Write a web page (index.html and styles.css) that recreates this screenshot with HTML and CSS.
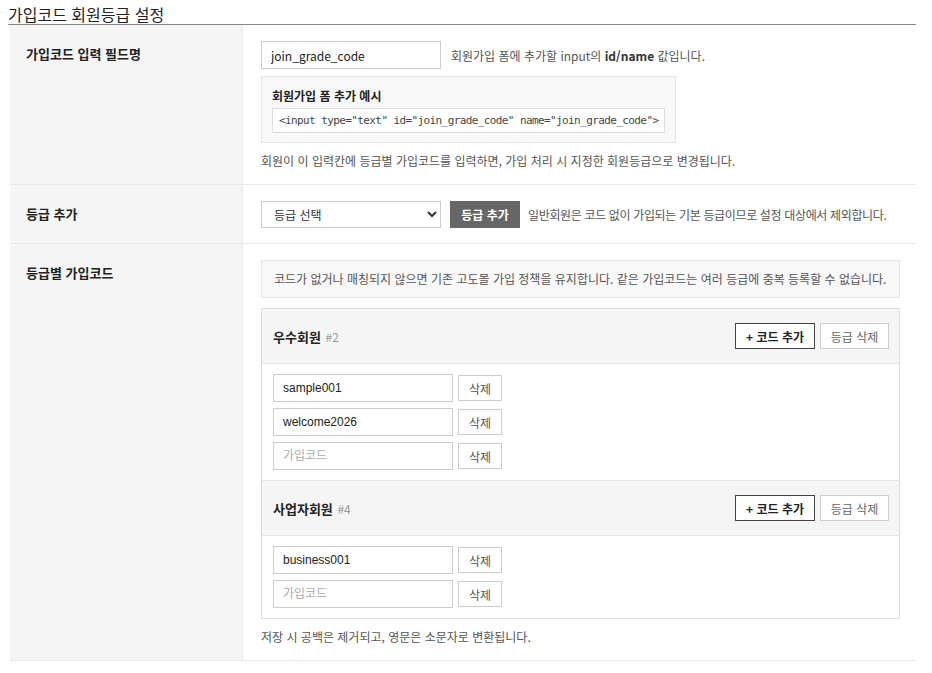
FILE: index.html
```html
<!DOCTYPE html>
<html lang="ko">
<head>
    <meta charset="UTF-8">
    <title>가입코드 회원등급 설정</title>
    <link rel="stylesheet" href="styles.css">
</head>
<body>

<div class="page">
    <h2 class="page-title">가입코드 회원등급 설정</h2>

    <table class="form-table">
        <tr>
            <th>가입코드 입력 필드명</th>
            <td>
                <div class="inline-row">
                    <input type="text" class="field" value="join_grade_code">
                    <span class="desc">회원가입 폼에 추가할 input의 <b>id/name</b> 값입니다.</span>
                </div>
                <div class="example-box">
                    <div class="example-title">회원가입 폼 추가 예시</div>
                    <div class="example-code">&lt;input type="text" id="join_grade_code" name="join_grade_code"&gt;</div>
                </div>
                <p class="note">회원이 이 입력칸에 등급별 가입코드를 입력하면, 가입 처리 시 지정한 회원등급으로 변경됩니다.</p>
            </td>
        </tr>
        <tr>
            <th>등급 추가</th>
            <td>
                <div class="inline-row">
                    <select class="field select">
                        <option>등급 선택</option>
                        <option>우수회원</option>
                        <option>사업자회원</option>
                    </select>
                    <button class="btn-dark">등급 추가</button>
                    <span class="desc">일반회원은 코드 없이 가입되는 기본 등급이므로 설정 대상에서 제외합니다.</span>
                </div>
            </td>
        </tr>
        <tr>
            <th>등급별 가입코드</th>
            <td>
                <div class="info-box">코드가 없거나 매칭되지 않으면 기존 고도몰 가입 정책을 유지합니다. 같은 가입코드는 여러 등급에 중복 등록할 수 없습니다.</div>

                <div class="grade-list">
                    <div class="grade-head">
                        <div class="grade-name">우수회원 <span class="grade-no">#2</span></div>
                        <div class="grade-actions">
                            <button class="btn-line">+ 코드 추가</button>
                            <button class="btn-light">등급 삭제</button>
                        </div>
                    </div>
                    <div class="grade-body">
                        <div class="code-row">
                            <input type="text" class="code-input" value="sample001">
                            <button class="btn-small">삭제</button>
                        </div>
                        <div class="code-row">
                            <input type="text" class="code-input" value="welcome2026">
                            <button class="btn-small">삭제</button>
                        </div>
                        <div class="code-row">
                            <input type="text" class="code-input" placeholder="가입코드">
                            <button class="btn-small">삭제</button>
                        </div>
                    </div>

                    <div class="grade-head">
                        <div class="grade-name">사업자회원 <span class="grade-no">#4</span></div>
                        <div class="grade-actions">
                            <button class="btn-line">+ 코드 추가</button>
                            <button class="btn-light">등급 삭제</button>
                        </div>
                    </div>
                    <div class="grade-body">
                        <div class="code-row">
                            <input type="text" class="code-input" value="business001">
                            <button class="btn-small">삭제</button>
                        </div>
                        <div class="code-row">
                            <input type="text" class="code-input" placeholder="가입코드">
                            <button class="btn-small">삭제</button>
                        </div>
                    </div>
                </div>

                <p class="note">저장 시 공백은 제거되고, 영문은 소문자로 변환됩니다.</p>
            </td>
        </tr>
    </table>
</div>

</body>
</html>
```

FILE: styles.css
```css
body {
    margin: 0;
    font-family: "Noto Sans CJK KR", "Noto Sans", sans-serif;
    color: #222;
    background: #fff;
}
.page {
    padding: 0 16px 0 8px;
}
.page-title {
    margin: 0;
    padding-top: 4px;
    font-size: 16px;
    font-weight: normal;
    line-height: 20px;
    color: #222;
    border-bottom: 1px solid #888;
}
.form-table {
    width: calc(100% - 2px);
    margin-left: 2px;
    border-collapse: collapse;
    border-bottom: 1px solid #ddd;
}
.form-table th {
    width: 200px;
    padding: 20px 16px;
    background: #f5f5f5;
    border-right: 1px solid #e8e8e8;
    border-bottom: 1px solid #e8e8e8;
    text-align: left;
    vertical-align: top;
    font-size: 13px;
    line-height: 18px;
    font-weight: bold;
}
.form-table td {
    padding: 16px 16px 14px 18px;
    border-bottom: 1px solid #e8e8e8;
    vertical-align: top;
    font-size: 12px;
}
.inline-row {
    display: flex;
    align-items: center;
}
.field {
    box-sizing: border-box;
    width: 180px;
    height: 28px;
    padding: 0 9px;
    border: 1px solid #ccc;
    background: #fff;
    font-family: "Noto Sans CJK KR", sans-serif;
    font-size: 12px;
    color: #222;
}
.select {
    padding: 0 6px 0 8px;
    color: #333;
    height: 27px;
}
.desc {
    margin-left: 10px;
    color: #555;
}
.desc b {
    color: #333;
}
.btn-dark {
    flex-shrink: 0;
    margin-left: 9px;
    width: 70px;
    height: 27px;
    border: none;
    background: #666;
    color: #fff;
    font-family: inherit;
    font-size: 12px;
    font-weight: bold;
}
.btn-dark + .desc {
    margin-left: 8px;
    white-space: nowrap;
    letter-spacing: -0.35px;
}
.example-box {
    display: inline-block;
    margin-top: 7px;
    padding: 11px 10px 9px 10px;
    background: #f8f8f8;
    border: 1px solid #e5e5e5;
}
.example-title {
    font-size: 12px;
    font-weight: bold;
    line-height: 16px;
    color: #222;
}
.example-code {
    margin-top: 4px;
    padding: 4px 6px;
    background: #fff;
    border: 1px solid #ddd;
    font-family: "DejaVu Sans Mono", monospace;
    font-size: 11px;
    line-height: 15px;
    letter-spacing: -0.6px;
    color: #444;
}
.note {
    margin: 9px 0 0;
    line-height: 18px;
    color: #555;
}
.info-box {
    padding: 10px 12px;
    line-height: 16px;
    background: #f8f8f8;
    border: 1px solid #e5e5e5;
    color: #555;
}
.grade-list {
    margin-top: 10px;
    border: 1px solid #ddd;
}
.grade-head {
    display: flex;
    align-items: center;
    justify-content: space-between;
    padding: 14px 10px 14px 11px;
    background: #f5f5f5;
    border-bottom: 1px solid #e5e5e5;
}
.grade-body + .grade-head {
    border-top: 1px solid #e5e5e5;
}
.grade-name {
    font-size: 13px;
    font-weight: bold;
}
.grade-no {
    margin-left: 1px;
    font-size: 12px;
    font-weight: normal;
    color: #999;
}
.grade-actions {
    display: flex;
    gap: 5px;
}
.btn-line, .btn-light {
    height: 26px;
    padding: 0;
    background: #fff;
    font-family: inherit;
    font-size: 12px;
}
.btn-line {
    width: 80px;
    border: 1px solid #444;
    color: #222;
    font-weight: bold;
}
.btn-light {
    width: 69px;
    border: 1px solid #ccc;
    color: #666;
}
.grade-body {
    display: flex;
    flex-direction: column;
    gap: 6px;
    padding: 10px 11px;
}
.code-row {
    display: flex;
    align-items: center;
    gap: 5px;
}
.code-input {
    box-sizing: border-box;
    width: 180px;
    height: 28px;
    padding: 0 9px;
    border: 1px solid #ccc;
    font-family: "Liberation Sans", "Noto Sans CJK KR", sans-serif;
    font-size: 12px;
    color: #222;
}
.code-input::placeholder {
    color: #aaa;
    font-family: "Noto Sans CJK KR", sans-serif;
}
.btn-small {
    width: 44px;
    height: 26px;
    padding: 0;
    border: 1px solid #ccc;
    background: #fff;
    color: #555;
    font-family: inherit;
    font-size: 12px;
}
```
